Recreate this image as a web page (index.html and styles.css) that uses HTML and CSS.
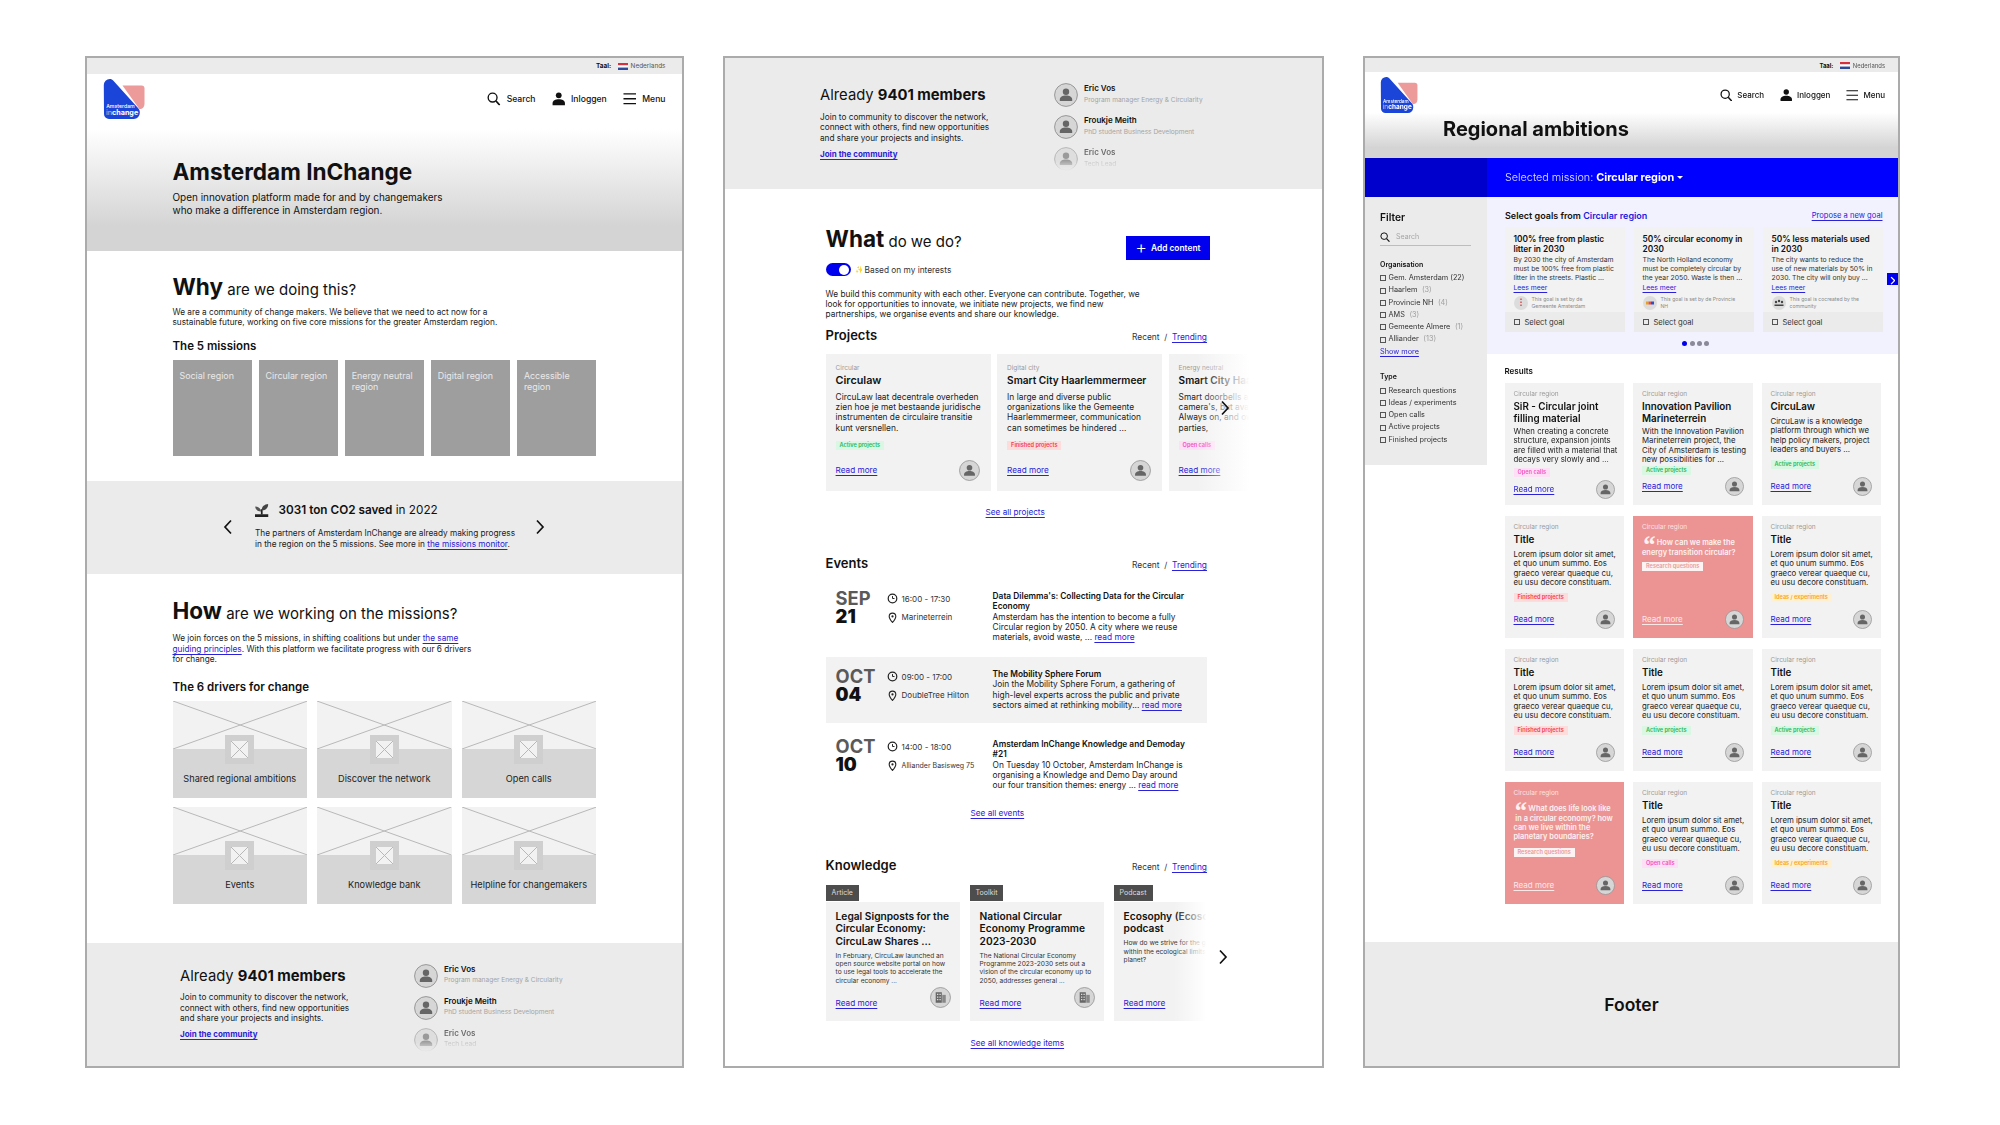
FILE: index.html
```html
<!DOCTYPE html>
<html lang="en">
<head>
<meta charset="utf-8">
<title>Amsterdam InChange wireframes</title>
<link rel="stylesheet" href="styles.css">
</head>
<body>
<svg class="defs" aria-hidden="true">
  <symbol id="i-search" viewBox="0 0 14 14"><circle cx="5.800" cy="5.800" r="4.600" fill="none" stroke="#111" stroke-width="1.400"/><path d="M9.200 9.200l4 4.400" stroke="#111" stroke-width="1.600" fill="none"/></symbol>
  <symbol id="i-user" viewBox="0 0 14 14"><circle cx="7" cy="3.400" r="3" fill="#111"/><path fill="#111" d="M.6 14v-2.400C.6 9 3.400 7.600 7 7.600s6.400 1.400 6.400 4V14Z"/></symbol>
  <symbol id="i-menu" viewBox="0 0 14 14"><path d="M.5 2h13M.5 7h13M.5 12h13" stroke="#111" stroke-width="1.300" fill="none"/></symbol>
  <symbol id="flag" viewBox="0 0 10 7"><rect width="10" height="2.400" fill="#d8303c"/><rect y="2.400" width="10" height="2.200" fill="#fff"/><rect y="4.600" width="10" height="2.400" fill="#2f4a9a"/></symbol>
  <symbol id="avatar" viewBox="0 0 24 24"><circle cx="12" cy="12" r="11.400" fill="#d6d6d6" stroke="#8f8f8f" stroke-width=".9"/><circle cx="12" cy="8.800" r="3.200" fill="#666"/><path fill="#666" d="M5.800 18v-1.600c0-2.200 2.700-3.800 6.200-3.800s6.200 1.600 6.200 3.800V18Z"/></symbol>
  <symbol id="i-build" viewBox="0 0 24 24"><circle cx="12" cy="12" r="11.400" fill="#d6d6d6" stroke="#8f8f8f" stroke-width=".9"/><rect x="6.500" y="6" width="7" height="12" fill="#666"/><rect x="14" y="9" width="4" height="9" fill="#888"/><path d="M8 8.500h1.500M10.800 8.500h1.500M8 11.500h1.500M10.800 11.500h1.500M8 14.500h1.500M10.800 14.500h1.500" stroke="#ddd" stroke-width="1.300"/></symbol>
  <symbol id="chev-r" viewBox="0 0 10 16"><path d="M2 1.500l6 6.500-6 6.500" fill="none" stroke="#111" stroke-width="1.700"/></symbol>
  <symbol id="chev-l" viewBox="0 0 10 16"><path d="M8 1.500L2 8l6 6.500" fill="none" stroke="#111" stroke-width="1.700"/></symbol>
  <symbol id="clock" viewBox="0 0 10 10"><circle cx="5" cy="5" r="3.900" fill="none" stroke="#222" stroke-width="1.100"/><path d="M5 2.800V5h1.800" fill="none" stroke="#222" stroke-width=".9"/></symbol>
  <symbol id="pin" viewBox="0 0 10 10"><path d="M5 9.500C3.200 7.300 2 5.800 2 4a3 3 0 0 1 6 0c0 1.800-1.200 3.300-3 5.500Z" fill="none" stroke="#222" stroke-width="1"/><circle cx="5" cy="4" r="1" fill="#222"/></symbol>
  <symbol id="sprout" viewBox="0 0 14 14"><path fill="#222" d="M0 10.500h14V14H0Z"/><path fill="#222" d="M6.100 11V5.500h1.800V11Z"/><path fill="#444" d="M7 6.500C7 2.500 9.500.500 13.800 0 13.800 4 11 6.800 7 6.500Z"/><path fill="#555" d="M6.300 7.800C3 7.800.5 6 .2 2.500c3.300 0 5.800 2 6.100 5.300Z"/></symbol>
  <symbol id="org-a" viewBox="0 0 14 14"><circle cx="7" cy="7" r="7" fill="#dcdcdc"/><path d="M7 2.500v9" stroke="#d85050" stroke-width="1.500" stroke-dasharray="1.500 1.500"/></symbol>
  <symbol id="org-b" viewBox="0 0 14 14"><circle cx="7" cy="7" r="7" fill="#dcdcdc"/><rect x="3" y="5.500" width="2.500" height="3" fill="#e8a020"/><rect x="5.500" y="5.500" width="2.500" height="3" fill="#d85050"/><rect x="8" y="5.500" width="3" height="3" fill="#3050c0"/></symbol>
  <symbol id="org-c" viewBox="0 0 14 14"><circle cx="7" cy="7" r="7" fill="#dcdcdc"/><circle cx="4" cy="6" r="1.200" fill="#444"/><circle cx="7" cy="5" r="1.200" fill="#444"/><circle cx="10" cy="6" r="1.200" fill="#444"/><path d="M2.500 10V8.500h9V10Z" fill="#444"/></symbol>
  <symbol id="ph-x" viewBox="0 0 100 100" preserveAspectRatio="none"><path d="M0 0L100 100M100 0L0 100" stroke="#b8b8b8" stroke-width="1" vector-effect="non-scaling-stroke" fill="none"/></symbol>
</svg>

<main class="board">

  <!-- Frame 1 -->
  <section class="frame frame-one">
    <div class="lang"><b>Taal:</b><svg class="flag"><use href="#flag"/></svg><span>Nederlands</span></div>
    <header class="hero hero-home">
      <div class="bar">
        <svg class="logo" viewBox="0 0 42 40">
          <path fill="#ec9a9a" d="M19.500 6.500H38.500a3 3 0 0 1 3 3V25a5.500 5.500 0 0 1-5 5.300Z"/>
          <path fill="#1b45d8" d="M.8 6a6 6 0 0 1 6-6c1.500 0 2.600.6 3.600 1.700L35 29c1.200 1.300 1.800 2.400 1.800 4v1a6 6 0 0 1-6 6H6a5 5 0 0 1-5-5Z"/>
          <text x="3.200" y="28.500" class="lg-a">Amsterdam</text>
          <text x="3" y="35.500" class="lg-b"><tspan class="lg-in">in</tspan>change</text>
        </svg>
        <nav class="nav">
          <span class="nav-item"><svg class="ni"><use href="#i-search"/></svg>Search</span>
          <span class="nav-item"><svg class="ni"><use href="#i-user"/></svg>Inloggen</span>
          <span class="nav-item"><svg class="ni"><use href="#i-menu"/></svg>Menu</span>
        </nav>
      </div>
      <h1 class="home-title">Amsterdam InChange</h1>
      <p class="home-sub">Open innovation platform made for and by changemakers<br>who make a difference in Amsterdam region.</p>
    </header>

    <div class="why">
      <h2 class="big"><strong>Why</strong> are we doing this?</h2>
      <p class="copy why-copy">We are a community of change makers. We believe that we need to act now for a<br>sustainable future, working on five core missions for the greater Amsterdam region.</p>
      <h3 class="sub">The 5 missions</h3>
      <ul class="missions">
        <li>Social region</li>
        <li>Circular region</li>
        <li>Energy neutral region</li>
        <li>Digital region</li>
        <li>Accessible region</li>
      </ul>
    </div>

    <div class="impact">
      <svg class="chev"><use href="#chev-l"/></svg>
      <div class="impact-body">
        <div class="impact-head"><svg class="sprout"><use href="#sprout"/></svg><span><b>3031 ton CO2 saved</b> in 2022</span></div>
        <p class="copy">The partners of Amsterdam InChange are already making progress<br>in the region on the 5 missions. See more in <a href="#">the missions monitor</a>.</p>
      </div>
      <svg class="chev"><use href="#chev-r"/></svg>
    </div>

    <div class="how">
      <h2 class="big"><strong>How</strong> are we working on the missions?</h2>
      <p class="copy how-copy">We join forces on the 5 missions, in shifting coalitions but under <a href="#">the same</a><br><a href="#">guiding principles</a>. With this platform we facilitate progress with our 6 drivers<br>for change.</p>
      <h3 class="sub how-sub">The 6 drivers for change</h3>
      <div class="drivers">
        <article class="driver"><div class="driver-img"><svg class="xfill"><use href="#ph-x"/></svg></div><div class="driver-thumb"><svg class="xfill"><use href="#ph-x"/></svg></div><div class="driver-label">Shared regional ambitions</div></article>
        <article class="driver"><div class="driver-img"><svg class="xfill"><use href="#ph-x"/></svg></div><div class="driver-thumb"><svg class="xfill"><use href="#ph-x"/></svg></div><div class="driver-label">Discover the network</div></article>
        <article class="driver"><div class="driver-img"><svg class="xfill"><use href="#ph-x"/></svg></div><div class="driver-thumb"><svg class="xfill"><use href="#ph-x"/></svg></div><div class="driver-label">Open calls</div></article>
        <article class="driver"><div class="driver-img"><svg class="xfill"><use href="#ph-x"/></svg></div><div class="driver-thumb"><svg class="xfill"><use href="#ph-x"/></svg></div><div class="driver-label">Events</div></article>
        <article class="driver"><div class="driver-img"><svg class="xfill"><use href="#ph-x"/></svg></div><div class="driver-thumb"><svg class="xfill"><use href="#ph-x"/></svg></div><div class="driver-label">Knowledge bank</div></article>
        <article class="driver"><div class="driver-img"><svg class="xfill"><use href="#ph-x"/></svg></div><div class="driver-thumb"><svg class="xfill"><use href="#ph-x"/></svg></div><div class="driver-label">Helpline for changemakers</div></article>
      </div>
    </div>

    <div class="members members-one">
      <div class="members-text">
        <div class="members-title">Already <b>9401 members</b></div>
        <p class="copy members-copy">Join to community to discover the network,<br>connect with others, find new opportunities<br>and share your projects and insights.</p>
        <a class="join" href="#">Join the community</a>
      </div>
      <ul class="people">
        <li class="person"><svg class="av-24"><use href="#avatar"/></svg><div><div class="p-name">Eric Vos</div><div class="p-role">Program manager Energy &amp; Circularity</div></div></li>
        <li class="person"><svg class="av-24"><use href="#avatar"/></svg><div><div class="p-name">Froukje Meith</div><div class="p-role">PhD student Business Development</div></div></li>
        <li class="person person-fade"><svg class="av-24"><use href="#avatar"/></svg><div><div class="p-name">Eric Vos</div><div class="p-role">Tech Lead</div></div></li>
      </ul>
    </div>
  </section>

  <!-- Frame 2 -->
  <section class="frame frame-two">
    <div class="members members-two">
      <div class="members-text">
        <div class="members-title">Already <b>9401 members</b></div>
        <p class="copy members-copy">Join to community to discover the network,<br>connect with others, find new opportunities<br>and share your projects and insights.</p>
        <a class="join" href="#">Join the community</a>
      </div>
      <ul class="people">
        <li class="person"><svg class="av-24"><use href="#avatar"/></svg><div><div class="p-name">Eric Vos</div><div class="p-role">Program manager Energy &amp; Circularity</div></div></li>
        <li class="person"><svg class="av-24"><use href="#avatar"/></svg><div><div class="p-name">Froukje Meith</div><div class="p-role">PhD student Business Development</div></div></li>
        <li class="person person-fade"><svg class="av-24"><use href="#avatar"/></svg><div><div class="p-name">Eric Vos</div><div class="p-role">Tech Lead</div></div></li>
      </ul>
    </div>

    <div class="what">
      <div class="what-head">
        <h2 class="big"><strong>What</strong> do we do?</h2>
        <button class="add" type="button"><span class="plus">+</span>Add content</button>
      </div>
      <div class="interest"><span class="toggle"></span><span class="spark">✨</span><span>Based on my interests</span></div>
      <p class="copy what-copy">We build this community with each other. Everyone can contribute. Together, we<br>look for opportunities to innovate, we initiate new projects, we find new<br>partnerships, we organise events and share our knowledge.</p>

      <div class="sec-head projects-head"><h3>Projects</h3><span class="sort">Recent&nbsp; /&nbsp; <a href="#">Trending</a></span></div>
      <div class="rail rail-projects">
        <article class="pcard">
          <div class="lab">Circular</div><h4>Circulaw</h4>
          <p>CircuLaw laat decentrale overheden<br>zien hoe je met bestaande juridische<br>instrumenten de circulaire transitie<br>kunt versnellen.</p>
          <span class="tag t-active">Active projects</span>
          <div class="foot"><a href="#">Read more</a><svg class="av-21"><use href="#avatar"/></svg></div>
        </article>
        <article class="pcard">
          <div class="lab">Digital city</div><h4 class="h-long">Smart City Haarlemmermeer</h4>
          <p>In large and diverse public<br>organizations like the Gemeente<br>Haarlemmermeer, communication<br>can sometimes be hindered ...</p>
          <span class="tag t-finished">Finished projects</span>
          <div class="foot"><a href="#">Read more</a><svg class="av-21"><use href="#avatar"/></svg></div>
        </article>
        <article class="pcard">
          <div class="lab">Energy neutral</div><h4 class="h-long">Smart City Haarlemmermeer</h4>
          <p>Smart doorbells and<br>camera's, but available<br>Always on, and owned by<br>parties,</p>
          <span class="tag t-open">Open calls</span>
          <div class="foot"><a href="#">Read more</a><svg class="av-21"><use href="#avatar"/></svg></div>
        </article>
        <svg class="rail-arrow arrow-projects"><use href="#chev-r"/></svg>
      </div>
      <a class="see see-projects" href="#">See all projects</a>

      <div class="sec-head events-head"><h3>Events</h3><span class="sort">Recent&nbsp; /&nbsp; <a href="#">Trending</a></span></div>
      <div class="event first">
        <div class="date"><span>SEP</span><b>21</b></div>
        <div class="when"><div><svg class="ev-i"><use href="#clock"/></svg>16:00 - 17:30</div><div><svg class="ev-i"><use href="#pin"/></svg>Marineterrein</div></div>
        <div class="ev-text"><b>Data Dilemma's: Collecting Data for the Circular<br>Economy</b><br>Amsterdam has the intention to become a fully<br>Circular region by 2050. A city where we reuse<br>materials, avoid waste, ... <a href="#">read more</a></div>
      </div>
      <div class="event shade">
        <div class="date"><span>OCT</span><b>04</b></div>
        <div class="when"><div><svg class="ev-i"><use href="#clock"/></svg>09:00 - 17:00</div><div><svg class="ev-i"><use href="#pin"/></svg>DoubleTree Hilton</div></div>
        <div class="ev-text"><b>The Mobility Sphere Forum</b><br>Join the Mobility Sphere Forum, a gathering of<br>high-level experts across the public and private<br>sectors aimed at rethinking mobility... <a href="#">read more</a></div>
      </div>
      <div class="event last">
        <div class="date"><span>OCT</span><b>10</b></div>
        <div class="when"><div><svg class="ev-i"><use href="#clock"/></svg>14:00 - 18:00</div><div class="narrow"><svg class="ev-i"><use href="#pin"/></svg>Alliander Basisweg 75</div></div>
        <div class="ev-text"><b>Amsterdam InChange Knowledge and Demoday<br>#21</b><br>On Tuesday 10 October, Amsterdam InChange is<br>organising a Knowledge and Demo Day around<br>our four transition themes: energy ... <a href="#">read more</a></div>
      </div>
      <a class="see see-events" href="#">See all events</a>

      <div class="sec-head know-head"><h3>Knowledge</h3><span class="sort">Recent&nbsp; /&nbsp; <a href="#">Trending</a></span></div>
      <div class="rail rail-know">
        <article class="kcol">
          <span class="ktag">Article</span>
          <div class="kcard"><h4>Legal Signposts for the<br>Circular Economy:<br>CircuLaw Shares ...</h4>
            <p>In February, CircuLaw launched an<br>open source website portal on how<br>to use legal tools to accelerate the<br>circular economy ...</p>
            <div class="foot"><a href="#">Read more</a><svg class="av-21 lifted"><use href="#i-build"/></svg></div></div>
        </article>
        <article class="kcol">
          <span class="ktag">Toolkit</span>
          <div class="kcard"><h4>National Circular<br>Economy Programme<br>2023-2030</h4>
            <p>The National Circular Economy<br>Programme 2023-2030 sets out a<br>vision of the circular economy up to<br>2050, addresses general ...</p>
            <div class="foot"><a href="#">Read more</a><svg class="av-21 lifted"><use href="#i-build"/></svg></div></div>
        </article>
        <article class="kcol">
          <span class="ktag">Podcast</span>
          <div class="kcard"><h4>Ecosophy (Ecosofie)<br>podcast</h4>
            <p>How do we strive for the good life<br>within the ecological limits of our<br>planet?</p>
            <div class="foot"><a href="#">Read more</a></div></div>
        </article>
      </div>
      <svg class="rail-arrow arrow-know"><use href="#chev-r"/></svg>
      <a class="see see-know" href="#">See all knowledge items</a>
    </div>
  </section>

  <!-- Frame 3 -->
  <section class="frame frame-three">
    <div class="lang lang-sm"><b>Taal:</b><svg class="flag"><use href="#flag"/></svg><span>Nederlands</span></div>
    <header class="hero hero-region">
      <div class="bar bar-sm">
        <svg class="logo logo-sm" viewBox="0 0 42 40">
          <path fill="#ec9a9a" d="M19.500 6.500H38.500a3 3 0 0 1 3 3V25a5.500 5.500 0 0 1-5 5.300Z"/>
          <path fill="#1b45d8" d="M.8 6a6 6 0 0 1 6-6c1.500 0 2.600.6 3.600 1.700L35 29c1.200 1.300 1.800 2.400 1.800 4v1a6 6 0 0 1-6 6H6a5 5 0 0 1-5-5Z"/>
          <text x="3.200" y="28.500" class="lg-a">Amsterdam</text>
          <text x="3" y="35.500" class="lg-b"><tspan class="lg-in">in</tspan>change</text>
        </svg>
        <nav class="nav nav-sm">
          <span class="nav-item"><svg class="ni"><use href="#i-search"/></svg>Search</span>
          <span class="nav-item"><svg class="ni"><use href="#i-user"/></svg>Inloggen</span>
          <span class="nav-item"><svg class="ni"><use href="#i-menu"/></svg>Menu</span>
        </nav>
      </div>
      <h1 class="region-title">Regional ambitions</h1>
    </header>
    <div class="mission-bar">
      <div class="mission-side"></div>
      <div class="mission-main">Selected mission: <b>Circular region</b><span class="caret"></span></div>
    </div>
    <div class="region-body">
      <aside class="filter">
        <h3>Filter</h3>
        <div class="f-search"><svg class="f-ico"><use href="#i-search"/></svg><span>Search</span></div>
        <h5>Organisation</h5>
        <ul class="checks">
          <li><i></i>Gem. Amsterdam (22)</li>
          <li><i></i>Haarlem <em>(3)</em></li>
          <li><i></i>Provincie NH <em>(4)</em></li>
          <li><i></i>AMS <em>(3)</em></li>
          <li><i></i>Gemeente Almere <em>(1)</em></li>
          <li><i></i>Alliander <em>(13)</em></li>
          <li><a href="#">Show more</a></li>
        </ul>
        <h5>Type</h5>
        <ul class="checks">
          <li><i></i>Research questions</li>
          <li><i></i>Ideas / experiments</li>
          <li><i></i>Open calls</li>
          <li><i></i>Active projects</li>
          <li><i></i>Finished projects</li>
        </ul>
      </aside>
      <div class="region-main">
        <div class="goals">
          <div class="goals-head"><h3>Select goals from <span>Circular region</span></h3><a href="#">Propose a new goal</a></div>
          <div class="goal-row">
            <article class="goal">
              <h4>100% free from plastic<br>litter in 2030</h4>
              <p>By 2030 the city of Amsterdam<br>must be 100% free from plastic<br>litter in the streets. Plastic ...</p>
              <a href="#">Lees meer</a>
              <div class="setter"><svg class="org"><use href="#org-a"/></svg><span>This goal is set by de<br>Gemeente Amsterdam</span></div>
              <div class="goal-foot"><i></i>Select goal</div>
            </article>
            <article class="goal">
              <h4>50% circular economy in<br>2030</h4>
              <p>The North Holland economy<br>must be completely circular by<br>the year 2050. Waste is then ...</p>
              <a href="#">Lees meer</a>
              <div class="setter"><svg class="org"><use href="#org-b"/></svg><span>This goal is set by de Provincie<br>NH</span></div>
              <div class="goal-foot"><i></i>Select goal</div>
            </article>
            <article class="goal">
              <h4>50% less materials used<br>in 2030</h4>
              <p>The city wants to reduce the<br>use of new materials by 50% in<br>2030. The city will only buy ...</p>
              <a href="#">Lees meer</a>
              <div class="setter"><svg class="org"><use href="#org-c"/></svg><span>This goal is cocreated by the<br>community</span></div>
              <div class="goal-foot"><i></i>Select goal</div>
            </article>
          </div>
          <div class="dots"><i class="on"></i><i></i><i></i><i></i></div>
          <span class="goal-next"><svg viewBox="0 0 10 16"><path d="M3 3l5 5-5 5" fill="none" stroke="#fff" stroke-width="1.800"/></svg></span>
        </div>
        <div class="results">
          <h3>Results</h3>
          <div class="r-grid">
            <article class="rcard two-line low">
              <div class="lab">Circular region</div><h4>SiR - Circular joint<br>filling material</h4>
              <p>When creating a concrete<br>structure, expansion joints<br>are filled with a material that<br>decays very slowly and ...</p>
              <span class="tag t-open">Open calls</span>
              <div class="foot"><a href="#">Read more</a><svg class="av-19"><use href="#avatar"/></svg></div>
            </article>
            <article class="rcard two-line">
              <div class="lab">Circular region</div><h4>Innovation Pavilion<br>Marineterrein</h4>
              <p>With the Innovation Pavilion<br>Marineterrein project, the<br>City of Amsterdam is testing<br>new possibilities for ...</p>
              <span class="tag t-active">Active projects</span>
              <div class="foot"><a href="#">Read more</a><svg class="av-19"><use href="#avatar"/></svg></div>
            </article>
            <article class="rcard">
              <div class="lab">Circular region</div><h4>CircuLaw</h4>
              <p>CircuLaw is a knowledge<br>platform through which we<br>help policy makers, project<br>leaders and buyers ...</p>
              <span class="tag t-active">Active projects</span>
              <div class="foot"><a href="#">Read more</a><svg class="av-19"><use href="#avatar"/></svg></div>
            </article>

            <article class="rcard">
              <div class="lab">Circular region</div><h4>Title</h4>
              <p>Lorem ipsum dolor sit amet,<br>et quo unum summo. Eos<br>graeco verear quaeque cu,<br>eu usu decore constituam.</p>
              <span class="tag t-finished">Finished projects</span>
              <div class="foot"><a href="#">Read more</a><svg class="av-19"><use href="#avatar"/></svg></div>
            </article>
            <article class="rcard pink">
              <div class="lab">Circular region</div>
              <div class="q-text q-short"><span class="q">“</span> How can we make the<br>energy transition circular?</div>
              <span class="tag t-research">Research questions</span>
              <div class="foot"><a href="#">Read more</a><svg class="av-19"><use href="#avatar"/></svg></div>
            </article>
            <article class="rcard">
              <div class="lab">Circular region</div><h4>Title</h4>
              <p>Lorem ipsum dolor sit amet,<br>et quo unum summo. Eos<br>graeco verear quaeque cu,<br>eu usu decore constituam.</p>
              <span class="tag t-ideas">Ideas / experiments</span>
              <div class="foot"><a href="#">Read more</a><svg class="av-19"><use href="#avatar"/></svg></div>
            </article>

            <article class="rcard">
              <div class="lab">Circular region</div><h4>Title</h4>
              <p>Lorem ipsum dolor sit amet,<br>et quo unum summo. Eos<br>graeco verear quaeque cu,<br>eu usu decore constituam.</p>
              <span class="tag t-finished">Finished projects</span>
              <div class="foot"><a href="#">Read more</a><svg class="av-19"><use href="#avatar"/></svg></div>
            </article>
            <article class="rcard">
              <div class="lab">Circular region</div><h4>Title</h4>
              <p>Lorem ipsum dolor sit amet,<br>et quo unum summo. Eos<br>graeco verear quaeque cu,<br>eu usu decore constituam.</p>
              <span class="tag t-active">Active projects</span>
              <div class="foot"><a href="#">Read more</a><svg class="av-19"><use href="#avatar"/></svg></div>
            </article>
            <article class="rcard">
              <div class="lab">Circular region</div><h4>Title</h4>
              <p>Lorem ipsum dolor sit amet,<br>et quo unum summo. Eos<br>graeco verear quaeque cu,<br>eu usu decore constituam.</p>
              <span class="tag t-active">Active projects</span>
              <div class="foot"><a href="#">Read more</a><svg class="av-19"><use href="#avatar"/></svg></div>
            </article>

            <article class="rcard pink">
              <div class="lab">Circular region</div>
              <div class="q-text"><span class="q">“</span> What does life look like<br>&nbsp;in a circular economy? how<br>can we live within the<br>planetary boundaries?</div>
              <span class="tag t-research">Research questions</span>
              <div class="foot"><a href="#">Read more</a><svg class="av-19"><use href="#avatar"/></svg></div>
            </article>
            <article class="rcard">
              <div class="lab">Circular region</div><h4>Title</h4>
              <p>Lorem ipsum dolor sit amet,<br>et quo unum summo. Eos<br>graeco verear quaeque cu,<br>eu usu decore constituam.</p>
              <span class="tag t-open">Open calls</span>
              <div class="foot"><a href="#">Read more</a><svg class="av-19"><use href="#avatar"/></svg></div>
            </article>
            <article class="rcard">
              <div class="lab">Circular region</div><h4>Title</h4>
              <p>Lorem ipsum dolor sit amet,<br>et quo unum summo. Eos<br>graeco verear quaeque cu,<br>eu usu decore constituam.</p>
              <span class="tag t-ideas">Ideas / experiments</span>
              <div class="foot"><a href="#">Read more</a><svg class="av-19"><use href="#avatar"/></svg></div>
            </article>
          </div>
        </div>
      </div>
    </div>
    <footer class="page-foot">Footer</footer>
  </section>
</main>
</body>
</html>
```
FILE: styles.css
```css
* { box-sizing: border-box; }
html, body { margin: 0; padding: 0; background: #fff; }
body { font-family: Inter, "Noto Sans", "Liberation Sans", sans-serif; color: #111; width: 2000px; height: 1125px; overflow: hidden; }
h1, h2, h3, h4, h5, p, ul { margin: 0; padding: 0; font-weight: inherit; font-size: inherit; }
ul { list-style: none; }
a { color: #2a22d8; text-decoration: underline; text-underline-offset: 1.5px; text-decoration-thickness: .6px; }
svg { display: block; }
.defs { position: absolute; width: 0; height: 0; }

.lg-a { font: 500 5.2px Inter, sans-serif; fill: #fff; }
.lg-b { font: 700 7.2px Inter, sans-serif; fill: #fff; }
.lg-in { fill: #f4b4c4; font-weight: 400; }

.board { display: flex; gap: 39.5px; padding: 56px 0 0 84.5px; align-items: flex-start; filter: blur(.4px); }
.frame { height: 1012px; border: 2px solid #ababab; display: flex; flex-direction: column; background: #fff; overflow: hidden; position: relative; }
.frame-one { width: 599px; }
.frame-two { width: 600.5px; }
.frame-three { width: 537px; }

.lang { height: 16px; flex: none; background: #ebebeb; display: flex; justify-content: flex-end; align-items: center; padding-right: 16px; font-size: 6.4px; color: #555; }
.lang b { color: #111; font-weight: 700; }
.flag { width: 10px; height: 7px; margin: 0 3px 0 6.5px; }
.lang-sm { height: 14px; padding-right: 13px; font-size: 5.9px; }

.hero { flex: none; }
.hero-home { height: 177px; background: linear-gradient(#fff 31%, #d4d4d4 86%); }
.hero-region { height: 86px; background: linear-gradient(#fff 47%, #d4d4d4 88%); }
.bar { display: flex; justify-content: space-between; align-items: center; padding: 5px 16px 0 16px; }
.bar-sm { padding: 5px 13px 0 15px; }
.logo { width: 42px; height: 40px; }
.logo-sm { width: 38px; height: 36px; }
.nav { display: flex; gap: 16px; font-size: 8.6px; font-weight: 500; }
.nav-item { display: flex; align-items: center; gap: 6px; }
.ni { width: 13.5px; height: 13.5px; }
.nav-sm { font-size: 8px; gap: 15.5px; }
.nav-sm .nav-item { gap: 5px; }
.nav-sm .ni { width: 12.5px; height: 12.5px; }
.home-title { font-size: 22.6px; line-height: 28px; font-weight: 700; margin: 39px 0 0 86px; }
.home-sub { font-size: 9.95px; line-height: 13px; margin: 4.500px 0 0 86px; }
.region-title { font-size: 20px; line-height: 24px; font-weight: 700; margin: 4px 0 0 78px; }

.big { font-size: 15px; height: 26px; line-height: 30px; font-weight: 400; white-space: nowrap; }
.big strong { font-size: 22.5px; font-weight: 700; line-height: 1; }
.copy { font-size: 8.24px; line-height: 10.5px; color: #222; white-space: nowrap; }
.sub { font-size: 11.5px; line-height: 14px; font-weight: 600; }

.why { padding: 24px 0 25px 86px; flex: none; }
.why-copy { margin-top: 5.700px; }
.why .sub { margin-top: 11px; }
.missions { display: flex; gap: 7.100px; margin-top: 7px; }
.missions li { width: 79px; height: 96px; background: #9e9e9e; color: #e9e9e9; font-size: 8.9px; line-height: 11.500px; padding: 10px 7px 0; }

.impact { flex: none; height: 93px; background: #ebebeb; display: flex; align-items: center; justify-content: center; gap: 22px; }
.chev { width: 10px; height: 16px; }
.impact-body { width: 258px; margin-bottom: 3px; padding-top: 1px; }
.impact-head { display: flex; align-items: center; gap: 10px; font-size: 11.75px; line-height: 14px; }
.impact-head b { font-weight: 600; }
.sprout { width: 13.5px; height: 13.5px; }
.impact .copy { margin-top: 11px; line-height: 10.300px; }

.how { padding: 25px 0 39px 86px; flex: none; }
.how-copy { margin-top: 8.700px; }
.how-sub { margin-top: 14.800px; }
.drivers { display: grid; grid-template-columns: repeat(3, 134.500px); gap: 9px 10px; margin-top: 7px; }
.driver { position: relative; height: 97px; background: #d6d6d6; }
.driver-img { height: 48px; background: #f2f2f2; }
.xfill { width: 100%; height: 100%; }
.driver-thumb { position: absolute; left: 52.750px; top: 34px; width: 29px; height: 29px; background: #cfcfcf; padding: 6px; }
.driver-thumb .xfill { background: #f2f2f2; }
.driver-label { text-align: center; font-size: 9.2px; line-height: 12px; padding-top: 24px; color: #222; position: relative; }

.members { background: #ebebeb; flex: 1; display: flex; }
.members-one { padding: 21px 0 0 93.5px; }
.members-two { flex: none; height: 131px; padding: 25px 0 0 95px; }
.members-text { width: 233.500px; flex: none; padding-top: 3px; }
.members-title { font-size: 14.8px; line-height: 18px; white-space: nowrap; }
.members-title b { font-weight: 700; }
.members-copy { margin-top: 7.700px; }
.join { display: block; font-size: 8px; line-height: 11px; font-weight: 700; margin-top: 5.500px; }
.people { display: flex; flex-direction: column; gap: 8px; }
.person { display: flex; align-items: center; gap: 6.500px; height: 24px; }
.av-24 { width: 24px; height: 24px; flex: none; }
.av-21 { width: 21px; height: 21px; flex: none; }
.av-19 { width: 19px; height: 19px; flex: none; }
.p-name { font-size: 8px; line-height: 11px; font-weight: 600; margin-top: -1px; margin-bottom: .5px; }
.p-role { font-size: 6.55px; line-height: 11px; color: #a4a4a4; white-space: nowrap; }
.person-fade { opacity: .6; -webkit-mask-image: linear-gradient(#000 55%, transparent 100%); mask-image: linear-gradient(#000 55%, transparent 100%); }

.what { padding: 38px 0 0 100.6px; flex: 1; position: relative; }
.what-head { display: flex; justify-content: space-between; align-items: flex-start; width: 384.500px; }
.add { display: flex; align-items: center; justify-content: center; gap: 4px; width: 84.500px; height: 24px; margin-top: 9px; border: 0; background: #0000ee; color: #fff; font: 600 8.4px Inter, sans-serif; padding: 0; }
.plus { font-size: 18px; font-weight: 300; line-height: 1; }
.interest { display: flex; align-items: center; height: 13px; margin-top: 3px; font-size: 8.3px; color: #333; }
.toggle { width: 25px; height: 13px; border-radius: 7px; background: #0000ee; position: relative; margin-right: 4px; }
.toggle::after { content: ""; position: absolute; right: 1.500px; top: 1.500px; width: 10px; height: 10px; border-radius: 50%; background: #fff; }
.spark { font-size: 7px; color: #f5d050; margin-right: 3px; width: 7px; overflow: hidden; }
.what-copy { margin-top: 12.800px; line-height: 10.300px; font-size: 8.27px; }
.sec-head { display: flex; justify-content: space-between; align-items: flex-end; width: 381.400px; }
.sec-head h3 { font-size: 13px; line-height: 16px; font-weight: 600; }
.sort { font-size: 8.4px; line-height: 12px; color: #333; }
.projects-head { margin-top: 7.300px; }
.rail { display: flex; position: relative; }
.rail::after { content: ""; position: absolute; top: 0; bottom: 0; }
.rail-arrow { position: absolute; width: 10px; height: 16px; z-index: 2; }
.rail-projects { gap: 6.500px; margin-top: 11px; width: 426px; height: 137px; overflow: hidden; }
.rail-projects::after { right: 0; width: 55px; background: linear-gradient(90deg, rgba(255,255,255,0), #fff 95%); }
.arrow-projects { left: 394px; top: 46px; }
.pcard { width: 165px; flex: none; height: 137px; background: #f2f2f2; padding: 10px 10px 9.500px; display: flex; flex-direction: column; }
.lab { font-size: 6.500px; line-height: 8px; color: #9a9a9a; }
.pcard h4 { font-size: 10.8px; line-height: 13px; font-weight: 600; margin-top: 2.500px; white-space: nowrap; }
.pcard .h-long { font-size: 10.1px; }
.pcard p { font-size: 8.4px; line-height: 10.300px; margin-top: 4.350px; white-space: nowrap; color: #222; }
.tag { align-self: flex-start; display: inline-block; font-size: 5.600px; line-height: 9px; padding: 0 4px; font-weight: 600; white-space: nowrap; margin-top: 7.500px; }
.t-active { background: #d9f7e3; color: #1fb85e; }
.t-finished { background: #ffdcdc; color: #f03c4a; }
.t-open { background: #fde0f6; color: #f050c0; }
.t-ideas { background: #fff0d2; color: #f5a623; }
.t-research { background: #fdf3f3; color: #e79a9a; }
.foot { margin-top: auto; display: flex; align-items: center; justify-content: space-between; font-size: 8.2px; line-height: 11px; }
.pcard .foot { padding-right: 1px; }
.see { display: block; width: max-content; font-size: 8.2px; line-height: 11px; }
.see-projects { margin: 16.500px 0 0 160px; }
.events-head { margin-top: 36.500px; }
.event { width: 381.400px; display: flex; }
.event.first { margin-top: 8px; height: 78px; }
.event.shade { background: #f2f2f2; height: 66px; }
.event.last { margin-top: 4px; height: 76.500px; }
.date { width: 61px; flex: none; padding: 10px 0 0 10px; display: flex; flex-direction: column; font-size: 18.3px; line-height: 18.500px; font-weight: 700; }
.date span { color: #5a5a5a; }
.date b { color: #111; }
.when { width: 106px; flex: none; padding-top: 14.500px; font-size: 8px; color: #333; }
.when > div { display: flex; align-items: center; gap: 4px; height: 11px; white-space: nowrap; }
.when > div + div { margin-top: 7.500px; }
.when .narrow { font-size: 7px; }
.ev-i { width: 11px; height: 11px; flex: none; }
.ev-text { padding-top: 12px; font-size: 8.33px; line-height: 10.300px; color: #222; white-space: nowrap; }
.ev-text b { font-weight: 600; color: #111; }
.see-events { margin: 5px 0 0 145px; }
.know-head { margin-top: 37.500px; }
.rail-know { gap: 10px; margin-top: 12px; width: 384px; height: 136px; overflow: hidden; }
.rail-know::after { right: 0; width: 36px; background: linear-gradient(90deg, rgba(255,255,255,0), #fff 90%); }
.arrow-know { left: 493px; top: 759.5px; }
.kcol { width: 134px; flex: none; }
.ktag { display: block; width: max-content; height: 16px; background: #4d4d4d; color: #ddd; font-size: 7px; line-height: 16px; padding: 0 6px; }
.kcard { height: 119px; margin-top: 1px; background: #f2f2f2; padding: 7.800px 10px 12px; display: flex; flex-direction: column; }
.kcard h4 { font-size: 10.200px; line-height: 12.500px; font-weight: 600; white-space: nowrap; }
.kcard p { font-size: 6.600px; line-height: 8.300px; margin-top: 4.600px; white-space: nowrap; color: #333; }
.kcard .foot { align-items: flex-end; }
.lifted { margin-bottom: 1px; margin-right: -1px; }
.see-know { margin: 17.500px 0 0 145px; }

.mission-bar { display: flex; height: 39px; flex: none; }
.mission-side { width: 122px; background: #0000cc; }
.mission-main { flex: 1; background: #0000ff; color: #dfe0ff; font-size: 10.800px; line-height: 39px; padding-left: 18px; font-weight: 300; }
.mission-main b { font-weight: 700; color: #fff; }
.caret { display: inline-block; width: 0; height: 0; border: 3.500px solid transparent; border-top: 3.500px solid #fff; border-bottom: 0; margin-left: 3px; vertical-align: 2px; }

.region-body { display: flex; align-items: flex-start; flex: none; }
.filter { width: 122px; height: 268px; background: #ebebeb; padding: 13.500px 0 0 15px; flex: none; }
.filter h3 { font-size: 10.200px; line-height: 13px; font-weight: 600; }
.f-search { display: flex; align-items: center; gap: 6px; height: 14.500px; margin-top: 7.500px; padding-bottom: 2.500px; width: 91px; border-bottom: 1px solid #bdbdbd; font-size: 7px; color: #a5a5a5; }
.f-ico { width: 10px; height: 10px; }
.filter h5 { font-size: 7px; line-height: 9px; font-weight: 600; margin-top: 14px; }
.checks { margin-top: 3.700px; }
.checks li { display: flex; align-items: center; gap: 2.500px; font-size: 7.300px; line-height: 12.250px; color: #333; white-space: pre; }
.checks i, .goal-foot i { width: 6px; height: 6px; border: .8px solid #555; flex: none; }
.checks em { font-style: normal; color: #a0a0a0; }
.checks a { font-size: 7.300px; }

.region-main { flex: 1; }
.goals { height: 157px; background: #f2f2ff; padding: 12.500px 16px 0 18px; position: relative; }
.goals-head { display: flex; justify-content: space-between; align-items: center; height: 11px; }
.goals-head h3 { font-size: 9px; font-weight: 600; }
.goals-head h3 span { color: #1a1ae0; }
.goals-head a { font-size: 7.600px; }
.goal-row { display: flex; gap: 9.500px; margin-top: 6.500px; }
.goal { width: 119.500px; height: 105px; background: #f2f2f2; padding: 6.750px 8.500px 0; display: flex; flex-direction: column; position: relative; }
.goal h4 { font-size: 8.300px; line-height: 10.500px; font-weight: 600; white-space: nowrap; }
.goal p { font-size: 6.800px; line-height: 8.600px; margin-top: 1.650px; white-space: nowrap; color: #333; }
.goal > a { font-size: 6.800px; line-height: 9px; margin-top: 1px; }
.setter { display: flex; align-items: flex-start; gap: 4px; margin-top: 3.500px; font-size: 5.100px; line-height: 7.200px; color: #8a8a8a; white-space: nowrap; }
.org { width: 14px; height: 14px; flex: none; }
.goal-foot { position: absolute; left: 0; right: 0; bottom: 0; height: 20px; background: #ebebeb; display: flex; align-items: center; padding-left: 8.500px; gap: 5px; font-size: 7.600px; color: #333; }
.dots { display: flex; justify-content: center; gap: 2.200px; margin-top: 9.200px; padding-left: 4px; }
.dots i { width: 5px; height: 5px; border-radius: 50%; background: #8a8a9a; }
.dots i.on { background: #0000ee; }
.goal-next { position: absolute; right: 1px; top: 76px; width: 11px; height: 12px; background: #0000ee; padding: 2px; }

.results { padding: 12px 16px 0 17.500px; }
.results > h3 { font-size: 8px; line-height: 10px; font-weight: 600; }
.r-grid { display: grid; grid-template-columns: repeat(3, 119.500px); grid-auto-rows: 122.250px; gap: 10.750px 9px; margin-top: 6.700px; }
.rcard { background: #f2f2f2; padding: 8.500px 9px 8.500px; display: flex; flex-direction: column; }
.rcard .lab { line-height: 7px; }
.rcard h4 { font-size: 9.800px; line-height: 12.300px; font-weight: 600; margin-top: 3px; white-space: nowrap; }
.rcard p { font-size: 7.800px; line-height: 9.300px; margin-top: 3.550px; white-space: nowrap; color: #222; }
.rcard .tag { margin-top: 6px; }
.rcard .foot { padding-right: 0; font-size: 8px; }
.two-line p { margin-top: 1.250px; }
.two-line .tag { margin-top: 2.250px; }
.low .tag { margin-top: 4.250px; }
.low .foot { margin-bottom: -2.300px; }
.pink { background: #ec9494; color: #fff; }
.pink .lab { color: #fbe3e3; }
.pink .foot a { color: #fde8e8; }
.q-text { font-size: 7.4px; line-height: 9.400px; font-weight: 600; white-space: nowrap; margin-top: 7px; color: #fdf1f1; }
.q { font: 700 italic 26px "Liberation Serif", serif; line-height: 0; vertical-align: -8px; }
.q-short + .tag { margin-top: 5px; }

.page-foot { margin-top: auto; height: 124px; flex: none; background: #ebebeb; display: flex; align-items: center; justify-content: center; font-size: 17.500px; font-weight: 600; }
```
